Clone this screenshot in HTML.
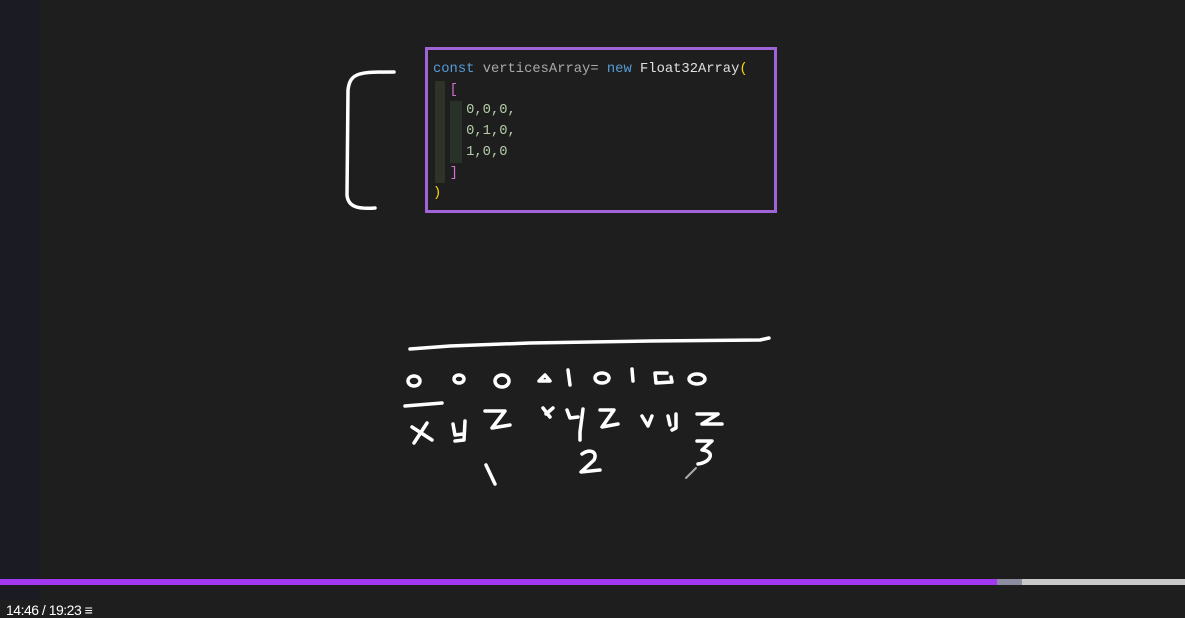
<!DOCTYPE html>
<html><head><style>
body{margin:0;width:1185px;height:614px;background:#1e1e1e;overflow:hidden;position:relative;font-family:"Liberation Mono",monospace}
.strip{position:absolute;left:0;top:0;width:40px;height:600px;background:#1b1b23}
.box{position:absolute;left:425px;top:47px;width:346px;height:160px;border:3px solid #a064d8;background:#1e1e1e}
.code{position:absolute;left:433px;top:60px;font-size:13.8px;line-height:20.7px;color:#9cdcfe;white-space:pre}
.k{color:#569cd6}.v{color:#aaa}.f{color:#e0e0e0}.y{color:#ffd700}.p{color:#d16fd1}.n{color:#b5cea8}
.g1{position:absolute;left:435px;top:81px;width:10px;height:102px;background:#2f3226}
.g2{position:absolute;left:450px;top:101px;width:12px;height:62px;background:#283228}
.bar{position:absolute;left:0;top:579px;height:6px;width:1185px;background:#c8c8c8}
.bar i{position:absolute;left:0;top:0;height:6px;width:997px;background:#a238f0}
.bar b{position:absolute;left:997px;top:0;height:6px;width:25px;background:#8c8ca0}
.time{position:absolute;left:6px;top:602px;color:#fff;font:14px "Liberation Sans",sans-serif;letter-spacing:-0.5px}
</style></head><body>
<div class="strip"></div>
<div class="box"></div>
<div class="g1"></div><div class="g2"></div>
<div class="code"><span class="k">const</span> <span class="v">verticesArray=</span> <span class="k">new</span> <span class="f">Float32Array</span><span class="y">(</span>
  <span class="p">[</span>
    <span class="n">0,0,0,</span>
    <span class="n">0,1,0,</span>
    <span class="n">1,0,0</span>
  <span class="p">]</span>
<span class="y">)</span></div>
<svg width="1185" height="614" style="position:absolute;left:0;top:0" fill="none" stroke="#fff" stroke-width="3.5" stroke-linecap="round" stroke-linejoin="round">
<path d="M394 72 C360 72 350 72 348 90 L347 195 C348 208 360 209 375 208"/>
<path d="M410 349 L450 346 L530 343 L650 341 L760 340 L769 338"/>
<ellipse cx="414" cy="381" rx="6" ry="5"/>
<ellipse cx="459" cy="379" rx="5" ry="4"/>
<ellipse cx="502" cy="381" rx="7" ry="6"/>
<path d="M539 381 L545 375 L550 381 Z"/>
<path d="M568 370 L570 385"/>
<ellipse cx="602" cy="378" rx="7" ry="5"/>
<path d="M632 369 L633 381"/>
<path d="M667 373 L655 373 L656 383 L672 382 L671 377"/>
<ellipse cx="697" cy="379" rx="8" ry="5"/>
<path d="M405 406 L442 403"/>
<path d="M412 427 L432 440 M427 423 L414 443"/>
<path d="M453 424 L455 435 L463 434 M465 421 L464 440 L455 441"/>
<path d="M485 411 L505 411 L492 428 L510 425"/>
<path d="M543 408 L550 417 M553 408 L546 414"/>
<path d="M567 410 L570 418 L578 417 M583 409 L580 432 L580 440"/>
<path d="M600 410 L614 410 L602 427 L618 424"/>
<path d="M642 416 L648 426 L652 416"/>
<path d="M668 416 L670 425 M676 414 L676 428 L672 430"/>
<path d="M697 414 L718 414 M702 424 L722 424 M718 414 L702 424"/>
<path d="M582 454 C590 448 598 452 594 460 L581 472 L600 470"/>
<path d="M697 441 L712 441 L702 450 C715 451 712 462 698 464"/>
<path d="M486 465 L495 484"/>
<path d="M686 478 L696 468" stroke="#aaa" stroke-width="2"/>
</svg>
<div class="bar"><i></i><b></b></div>
<div class="time">14:46 / 19:23 &#8801;</div>
</body></html>
